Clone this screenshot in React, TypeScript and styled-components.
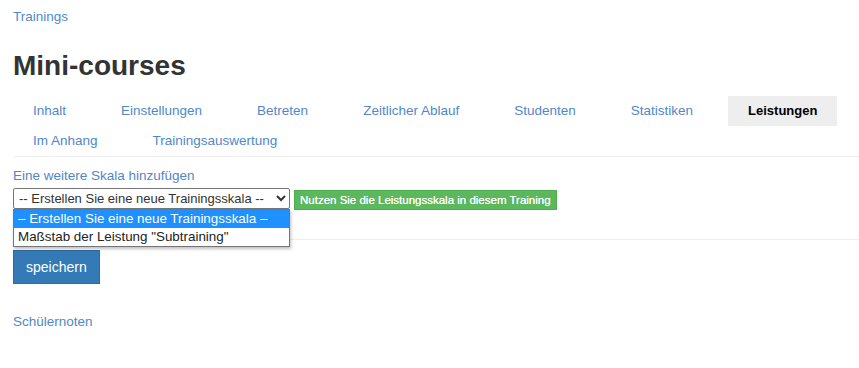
import React from "react";
import styled, { createGlobalStyle } from "styled-components";

const Global = createGlobalStyle`
  html, body { margin: 0; padding: 0; background: #fff; }
  body { font-family: "Liberation Sans", Arial, sans-serif; font-size: 13px; color: #333; }
`;

const Page = styled.div`
  padding: 8px 0 0 13px;
`;

const Breadcrumb = styled.a`
  display: block;
  color: #4f88c9;
  font-size: 13.5px;
  line-height: 18px;
  text-decoration: none;
`;

const Title = styled.h1`
  margin: 24px 0 0;
  font-size: 28px;
  line-height: 32px;
  font-weight: 700;
  color: #333;
`;

const Tabs = styled.nav`
  display: flex;
  flex-wrap: wrap;
  margin-top: 14px;
  border-bottom: 1px solid #eee;
`;

const Tab = styled.a<{ $active?: boolean }>`
  display: block;
  padding: 0 20px;
  margin-right: 15px;
  height: 30px;
  line-height: 30px;
  font-size: ${(p) => (p.$active ? "13px" : "13.5px")};
  text-decoration: none;
  color: ${(p) => (p.$active ? "#000" : "#4f88c9")};
  font-weight: ${(p) => (p.$active ? 700 : 400)};
  background: ${(p) => (p.$active ? "#eee" : "transparent")};
`;

const Form = styled.div`
  padding-top: 10px;
  border-bottom: 1px solid #eee;
  padding-bottom: 10px;
`;

const Label = styled.div`
  color: #4f88c9;
  font-size: 13.5px;
  line-height: 18px;
  margin-bottom: 3px;
`;

const Row = styled.div`
  display: flex;
  align-items: flex-start;
  gap: 4px;
  position: relative;
`;

const Select = styled.select`
  width: 277px;
  height: 21px;
  font-family: "Liberation Sans", Arial, sans-serif;
  font-size: 13px;
  color: #333;
  border: 1px solid #767676;
  border-radius: 2px;
  background: #fff;
  padding: 0 0 0 1px;
`;

const GreenButton = styled.button`
  margin-top: 2px;
  height: 20px;
  padding: 0 5px;
  background: #5cb85c;
  border: 1px solid #4cae4c;
  color: #fff;
  font-family: "Liberation Sans", Arial, sans-serif;
  font-size: 11.5px;
  line-height: 18px;
  font-weight: 400;
  white-space: nowrap;
  text-shadow: 0 0 0.4px #fff;
`;

const DropList = styled.ul`
  position: absolute;
  left: 0;
  top: 21px;
  width: 277px;
  box-sizing: border-box;
  margin: 0;
  padding: 0;
  list-style: none;
  background: #fff;
  border: 1px solid #767676;
  box-shadow: 1px 2px 3px rgba(0, 0, 0, 0.25);
  z-index: 2;
`;

const Option = styled.li<{ $selected?: boolean }>`
  height: 18px;
  line-height: 18px;
  padding-left: 4px;
  font-size: 13.4px;
  color: ${(p) => (p.$selected ? "#fff" : "#222")};
  background: ${(p) => (p.$selected ? "#1e90ff" : "#fff")};
  white-space: nowrap;
`;

const Spacer = styled.div`
  height: 19px;
`;

const SaveButton = styled.button`
  margin-top: 10px;
  height: 34px;
  padding: 0 12px;
  background: #337ab7;
  border: 1px solid #2e6da4;
  color: #fff;
  font-family: "Liberation Sans", Arial, sans-serif;
  font-size: 14px;
  line-height: 20px;
`;

const FooterLink = styled.a`
  display: block;
  margin-top: 29px;
  color: #4f88c9;
  font-size: 13.5px;
  line-height: 18px;
  text-decoration: none;
`;

const tabs = [
  "Inhalt",
  "Einstellungen",
  "Betreten",
  "Zeitlicher Ablauf",
  "Studenten",
  "Statistiken",
  "Leistungen",
  "Im Anhang",
  "Trainingsauswertung",
];

export default function App() {
  return (
    <>
      <Global />
      <Page>
        <Breadcrumb>Trainings</Breadcrumb>
        <Title>Mini-courses</Title>
        <Tabs>
          {tabs.map((t) => (
            <Tab key={t} $active={t === "Leistungen"}>
              {t}
            </Tab>
          ))}
        </Tabs>
        <Form>
          <Label>Eine weitere Skala hinzufügen</Label>
          <Row>
            <Select defaultValue="new">
              <option value="new">-- Erstellen Sie eine neue Trainingsskala --</option>
              <option value="sub">Maßstab der Leistung "Subtraining"</option>
            </Select>
            <GreenButton>Nutzen Sie die Leistungsskala in diesem Training</GreenButton>
            <DropList>
              <Option $selected>– Erstellen Sie eine neue Trainingsskala –</Option>
              <Option>Maßstab der Leistung "Subtraining"</Option>
            </DropList>
          </Row>
          <Spacer />
        </Form>
        <SaveButton>speichern</SaveButton>
        <FooterLink>Schülernoten</FooterLink>
      </Page>
    </>
  );
}
